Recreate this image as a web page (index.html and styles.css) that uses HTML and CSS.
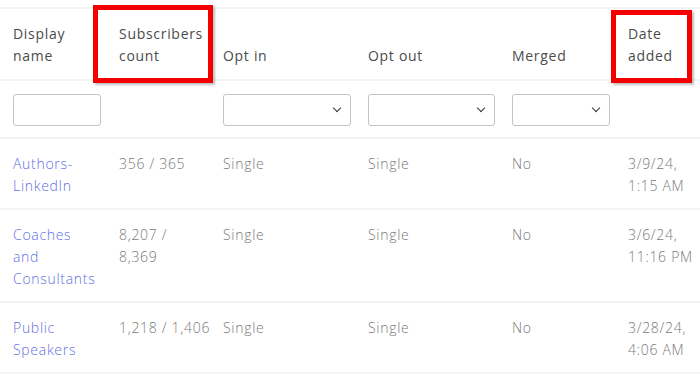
FILE: index.html
```html
<!DOCTYPE html>
<html lang="en">
<head>
    <meta charset="UTF-8">
    <title>Lists</title>
    <link rel="stylesheet" href="styles.css">
</head>
<body>
    <div class="list-wrap">
        <table class="lists">
            <colgroup>
                <col class="c-name">
                <col class="c-count">
                <col class="c-optin">
                <col class="c-optout">
                <col class="c-merged">
                <col class="c-date">
            </colgroup>
            <thead>
                <tr class="head-row">
                    <th>Display name</th>
                    <th>Subscribers count</th>
                    <th>Opt in</th>
                    <th>Opt out</th>
                    <th>Merged</th>
                    <th>Date added</th>
                </tr>
                <tr class="filter-row">
                    <td><input type="text" class="filter-input"></td>
                    <td></td>
                    <td><div class="select-wrap w-128"><select class="filter-select"><option></option></select></div></td>
                    <td><div class="select-wrap w-127"><select class="filter-select"><option></option></select></div></td>
                    <td><div class="select-wrap w-98"><select class="filter-select"><option></option></select></div></td>
                    <td></td>
                </tr>
            </thead>
            <tbody>
                <tr>
                    <td><a href="#">Authors-LinkedIn</a></td>
                    <td>356 / 365</td>
                    <td>Single</td>
                    <td>Single</td>
                    <td>No</td>
                    <td>3/9/24, <span class="nowrap">1:15 AM</span></td>
                </tr>
                <tr>
                    <td><a href="#">Coaches and Consultants</a></td>
                    <td>8,207 / 8,369</td>
                    <td>Single</td>
                    <td>Single</td>
                    <td>No</td>
                    <td>3/6/24, <span class="nowrap">11:16 PM</span></td>
                </tr>
                <tr>
                    <td><a href="#">Public Speakers</a></td>
                    <td class="nowrap">1,218 / 1,406</td>
                    <td>Single</td>
                    <td>Single</td>
                    <td>No</td>
                    <td>3/28/24, <span class="nowrap">4:06 AM</span></td>
                </tr>
            </tbody>
        </table>

        <!-- highlight boxes -->
        <div class="mark mark-count"></div>
        <div class="mark mark-date"></div>
    </div>
</body>
</html>
```

FILE: styles.css
```css
* {
    margin: 0;
    padding: 0;
    box-sizing: border-box;
}

body {
    background: #fff;
    font-family: 'Open Sans', 'DejaVu Sans', sans-serif;
    font-size: 14px;
    letter-spacing: 0.7px;
    color: #7a7a7a;
}

.list-wrap {
    position: relative;
    padding-top: 7px;
}

.lists {
    width: 700px;
    border-collapse: collapse;
    table-layout: fixed;
}

.c-name { width: 106px; }
.c-count { width: 104px; }
.c-optin { width: 145px; }
.c-optout { width: 144px; }
.c-merged { width: 116px; }
.c-date { width: 85px; }

.lists th,
.lists td {
    text-align: left;
    padding: 14px 8px 11px 13px;
    line-height: 22px;
    vertical-align: top;
    border-top: 2px solid #f3f3f5;
}

.lists th:last-child,
.lists td:last-child {
    padding-right: 0;
}

.head-row th {
    font-weight: 500;
    color: #4b4b4b;
    vertical-align: bottom;
    padding-top: 14px;
    padding-bottom: 12px;
}

.filter-row td {
    padding-top: 13px;
    padding-bottom: 11px;
}

.lists tbody tr:last-child td {
    border-bottom: 2px solid #f3f3f5;
}

.lists td {
    font-weight: 300;
}

.lists a {
    color: #5f70e3;
    text-decoration: none;
}

.nowrap {
    white-space: nowrap;
}

/* filter controls */
.filter-input {
    width: 88px;
    height: 32px;
    border: 1px solid #c4c4c4;
    border-radius: 3px;
    background: #fff;
}

.select-wrap {
    position: relative;
    height: 32px;
}

.w-128 { width: 128px; }
.w-127 { width: 127px; }
.w-98 { width: 98px; }

.filter-select {
    appearance: none;
    -webkit-appearance: none;
    width: 100%;
    height: 32px;
    border: 1px solid #c4c4c4;
    border-radius: 3px;
    background: #fff;
}

.select-wrap::after {
    content: '';
    position: absolute;
    right: 11px;
    top: 11px;
    width: 5px;
    height: 5px;
    border-right: 1.6px solid #333;
    border-bottom: 1.6px solid #333;
    transform: rotate(45deg);
    pointer-events: none;
}

/* red highlight frames */
.mark {
    position: absolute;
    border: 5px solid #f40000;
    box-shadow: 2px 2px 2px rgba(0, 0, 0, 0.25);
}

.mark-count {
    left: 93px;
    top: 5px;
    width: 120px;
    height: 78px;
}

.mark-date {
    left: 611px;
    top: 10px;
    width: 81px;
    height: 73px;
}
```
